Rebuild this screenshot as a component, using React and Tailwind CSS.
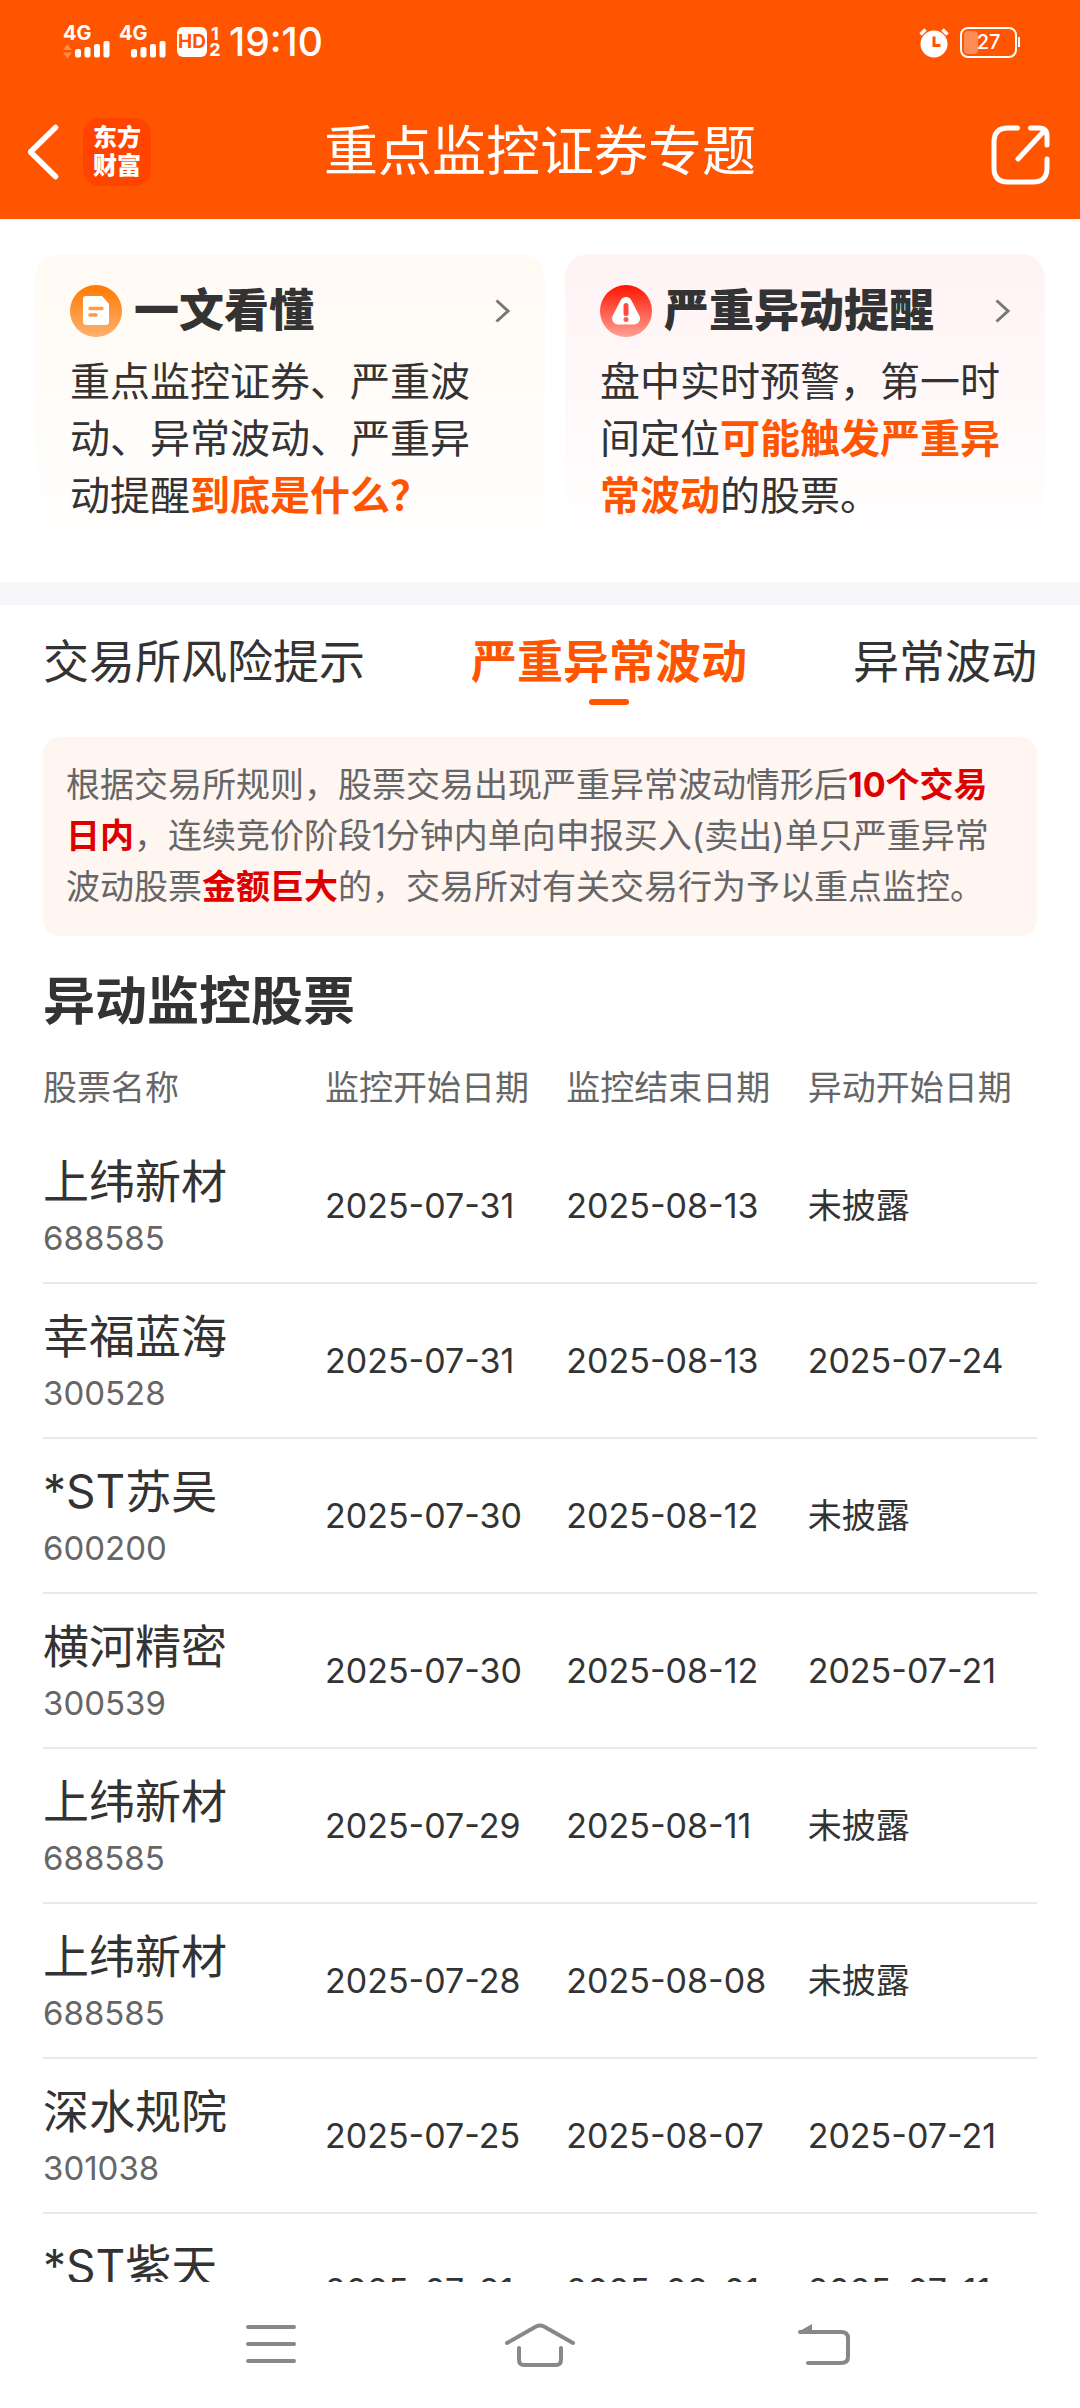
const stocks = [
  { name: "上纬新材", code: "688585", start: "2025-07-31", end: "2025-08-13", moved: "未披露" },
  { name: "幸福蓝海", code: "300528", start: "2025-07-31", end: "2025-08-13", moved: "2025-07-24" },
  { name: "*ST苏吴", code: "600200", start: "2025-07-30", end: "2025-08-12", moved: "未披露" },
  { name: "横河精密", code: "300539", start: "2025-07-30", end: "2025-08-12", moved: "2025-07-21" },
  { name: "上纬新材", code: "688585", start: "2025-07-29", end: "2025-08-11", moved: "未披露" },
  { name: "上纬新材", code: "688585", start: "2025-07-28", end: "2025-08-08", moved: "未披露" },
  { name: "深水规院", code: "301038", start: "2025-07-25", end: "2025-08-07", moved: "2025-07-21" },
  { name: "*ST紫天", code: "300280", start: "2025-07-21", end: "2025-08-01", moved: "2025-07-11" },
];

const tabs = ["交易所风险提示", "严重异常波动", "异常波动"];
const columns = ["监控开始日期", "监控结束日期", "异动开始日期"];

function Signal({ arrows }) {
  return (
    <div className="flex w-[48px] flex-col">
      <span className="text-[20px] leading-4 font-bold">4G</span>
      <svg width="48" height="18" viewBox="0 0 48 18" fill="currentColor" aria-hidden="true">
        {arrows && (
          <path d="M4.500 3l4.500 6H0zM0 11.500h9l-4.500 6z" fillOpacity="0.3" />
        )}
        <rect x="12" y="8" width="6" height="8.500" rx="2" />
        <rect x="21.500" y="6" width="6" height="10.500" rx="2" />
        <rect x="31" y="3" width="6" height="13.500" rx="2" />
        <rect x="40.500" y="0" width="6" height="16.500" rx="2" />
      </svg>
    </div>
  );
}

function StatusBar() {
  return (
    <div className="flex h-[84px] items-center justify-between pr-[60px] pl-[63px]">
      <div className="flex items-center">
        <Signal arrows />
        <div className="ml-2">
          <Signal />
        </div>
        <span className="ml-2.5 flex h-[30px] w-[30px] items-center justify-center rounded-md bg-white text-[19px] font-bold text-[#ff5500]">
          HD
        </span>
        <span className="ml-0.5 flex w-3 flex-col text-center text-[18px] leading-4 font-bold">
          <span>1</span>
          <span>2</span>
        </span>
        <time className="ml-2 text-[39px] leading-10 font-medium">19:10</time>
      </div>
      <div className="flex items-center">
        <svg width="30" height="32" viewBox="0 0 30 32" aria-hidden="true">
          <circle cx="15" cy="18" r="13.500" fill="#fff" />
          <path d="M1.500 8.500l5-5M28.500 8.500l-5-5" stroke="#fff" strokeWidth="3.500" />
          <path d="M15 10.500v9h6.500" fill="none" stroke="#ff5500" strokeWidth="3" />
        </svg>
        <span className="relative ml-[11px] flex h-[31px] w-[57px] items-center justify-center rounded-lg border-2 border-white text-[20px] leading-5 font-medium">
          <span className="absolute top-0.5 bottom-0.5 left-0.5 w-3.5 rounded-sm bg-[#ff8c54]" />
          <span className="relative">27</span>
        </span>
        <span className="ml-px h-2.5 w-0.5 bg-white" />
      </div>
    </div>
  );
}

function Header() {
  return (
    <header className="shrink-0 bg-[#ff5500] text-white">
      <StatusBar />
      <div className="grid h-[135px] grid-cols-[1fr_auto_1fr] items-center px-7">
        <div className="flex items-center gap-6">
          <button type="button" aria-label="返回">
            <svg width="31" height="56" viewBox="2 0 31 56" fill="none" stroke="#fff" strokeWidth="5.500" strokeLinecap="round" strokeLinejoin="round">
              <path d="M29.500 3.500L4.500 28l25 24.500" />
            </svg>
          </button>
          <a href="#home" className="flex h-[68px] w-[68px] flex-col items-center justify-center rounded-2xl bg-[#ff4400] text-[24px] leading-7 font-black">
            <span>东方</span>
            <span>财富</span>
          </a>
        </div>
        <h1 className="text-[54px] leading-[72px]">重点监控证券专题</h1>
        <button type="button" aria-label="分享" className="justify-self-end">
          <svg width="62" height="70" viewBox="0 -7 62 70" fill="none" stroke="#fff" strokeWidth="5" strokeLinecap="round" strokeLinejoin="round">
            <path d="M27.500 4H18Q4 4 4 18v26q0 14 14 14h25q14 0 14-14V35" />
            <path d="M40.500 4H49q8 0 8 8v9M55 6L28 35" />
          </svg>
        </button>
      </div>
    </header>
  );
}

function DocIcon() {
  return (
    <svg width="52" height="52" viewBox="0 0 52 52" aria-hidden="true">
      <defs>
        <linearGradient id="docFill" x1="0" y1="0" x2="0" y2="1">
          <stop offset="0" stopColor="#ff7a00" />
          <stop offset="1" stopColor="#ffb070" />
        </linearGradient>
      </defs>
      <circle cx="26" cy="26" r="26" fill="url(#docFill)" />
      <path d="M16 11h16l7 8v18q0 3-3 3H16q-3 0-3-3V14q0-3 3-3z" fill="#fff" />
      <path d="M20 23.500h12M20 30h6" stroke="#ff9a45" strokeWidth="3.500" strokeLinecap="round" />
    </svg>
  );
}

function AlertIcon() {
  return (
    <svg width="52" height="52" viewBox="0 0 52 52" aria-hidden="true">
      <defs>
        <linearGradient id="alertFill" x1="0" y1="0" x2="0" y2="1">
          <stop offset="0" stopColor="#ff1500" />
          <stop offset="1" stopColor="#ffa095" />
        </linearGradient>
      </defs>
      <circle cx="26" cy="26" r="26" fill="url(#alertFill)" />
      <path d="M26 18L18 33.500h16z" fill="#fff" stroke="#fff" strokeWidth="12" strokeLinejoin="round" />
      <path d="M26 20.500v8" stroke="#ff4a3d" strokeWidth="5" strokeLinecap="round" />
      <circle cx="26" cy="34.500" r="2.500" fill="#ff5a4d" />
    </svg>
  );
}

function GuideCard({ icon, title, className, children }) {
  return (
    <a href="#guide" className={`block rounded-3xl px-[35px] pt-[31px] pb-[34px] ${className}`}>
      <div className="flex items-center gap-3">
        {icon}
        <h2 className="text-[45px] leading-[50px] font-black">{title}</h2>
        <svg className="ml-auto" width="15" height="24" viewBox="0 0 15 24" fill="none" stroke="#777" strokeWidth="3" aria-hidden="true">
          <path d="M1.500 1.500L13 12 1.500 22.500" />
        </svg>
      </div>
      <p className="mt-4 text-[40px] leading-[57px]">{children}</p>
    </a>
  );
}

function NavBar() {
  return (
    <nav className="grid h-[126px] shrink-0 grid-cols-[1fr_auto_1fr] items-center bg-white px-[230px] text-[#888]">
      <button type="button" aria-label="菜单" className="ml-4 justify-self-start">
        <svg width="50" height="40" viewBox="0 0 50 40" fill="none" stroke="currentColor" strokeWidth="4" strokeLinecap="round">
          <path d="M2 2h46M2 19h46M2 36h46" />
        </svg>
      </button>
      <button type="button" aria-label="主页">
        <svg width="72" height="44" viewBox="0 0 72 44" fill="none" stroke="currentColor" strokeWidth="4" strokeLinecap="round" strokeLinejoin="round">
          <path d="M3 20L32 3.500Q36 1.500 40 3.500L69 20" />
          <path d="M15 25v12q0 5 5 5h32q5 0 5-5V25" />
        </svg>
      </button>
      <button type="button" aria-label="返回上一页" className="justify-self-end">
        <svg width="52" height="44" viewBox="0 0 52 44" fill="none" stroke="currentColor" strokeWidth="4" strokeLinecap="round">
          <path d="M2 9h41q7 0 7 6v19q0 6-7 6H10" />
          <path d="M0 9L14 1v8z" fill="currentColor" stroke="none" />
        </svg>
      </button>
    </nav>
  );
}

export default function App() {
  return (
    <div className="flex h-screen flex-col bg-white font-['Inter','Noto_Sans_CJK_SC',sans-serif] text-[#333]">
      <Header />

      <main className="min-h-0 flex-1 overflow-hidden">
        <section className="grid grid-cols-[51fr_48fr] gap-5 px-[35px] pt-[35px] pb-6">
          <GuideCard icon={<DocIcon />} title="一文看懂" className="bg-linear-to-b from-[#fffaf3] to-white">
            <span className="block pr-6">
              重点监控证券、严重波动、异常波动、严重异动提醒
              <strong className="font-bold text-[#ff5500]">到底是什么？</strong>
            </span>
          </GuideCard>
          <GuideCard icon={<AlertIcon />} title="严重异动提醒" className="bg-linear-to-b from-[#fff3f4] to-white">
            盘中实时预警，第一时间定位
            <strong className="font-bold text-[#ff5500]">可能触发严重异常波动</strong>
            的股票。
          </GuideCard>
        </section>

        <div className="h-[23px] bg-[#f7f7fa]" />

        <section className="px-[43px]">
          <div role="tablist" className="flex items-start justify-between pt-6">
            {tabs.map((tab, index) => (
              <button
                key={tab}
                type="button"
                role="tab"
                aria-selected={index === 1}
                className={
                  index === 1
                    ? "flex flex-col items-center gap-1.5 text-[46px] leading-[64px] font-bold text-[#ff5500]"
                    : "text-[46px] leading-[64px]"
                }
              >
                {tab}
                {index === 1 && <span className="h-1.5 w-10 rounded-full bg-[#ff5500]" />}
              </button>
            ))}
          </div>

          <p className="mt-8 rounded-2xl bg-[#fff5f1] px-[23px] pt-[22px] pb-6 text-[34px] leading-[51px] text-[#666]">
            根据交易所规则，股票交易出现严重异常波动情形后
            <strong className="font-bold text-[#dd0000]">10个交易日内</strong>
            ，连续竞价阶段1分钟内单向申报买入(卖出)单只严重异常波动股票
            <strong className="font-bold text-[#dd0000]">金额巨大</strong>
            的，交易所对有关交易行为予以重点监控。
          </p>

          <h2 className="mt-9 mb-[13px] text-[52px] leading-[60px] font-bold">异动监控股票</h2>

          <table className="w-full table-fixed border-separate border-spacing-0 text-left text-[34px]">
            <thead>
              <tr className="h-[84px] text-[#666]">
                <th className="w-[270px] p-0 font-normal">股票名称</th>
                {columns.map((column) => (
                  <th key={column} className="p-0 pl-3 font-normal whitespace-nowrap">
                    {column}
                  </th>
                ))}
              </tr>
            </thead>
            <tbody>
              {stocks.map((stock) => (
                <tr key={stock.code + stock.start}>
                  <td className="border-b-2 border-[#e8e8e8] p-0 pt-[22px] pb-[17px]">
                    <div className="text-[46px] leading-[60px]">{stock.name}</div>
                    <div className="text-[33px] leading-[54px] text-[#666]">{stock.code}</div>
                  </td>
                  <td className="border-b-2 border-[#e8e8e8] p-0 pl-3">{stock.start}</td>
                  <td className="border-b-2 border-[#e8e8e8] p-0 pl-3">{stock.end}</td>
                  <td className="border-b-2 border-[#e8e8e8] p-0 pl-3">{stock.moved}</td>
                </tr>
              ))}
            </tbody>
          </table>
        </section>
      </main>

      <NavBar />
    </div>
  );
}
